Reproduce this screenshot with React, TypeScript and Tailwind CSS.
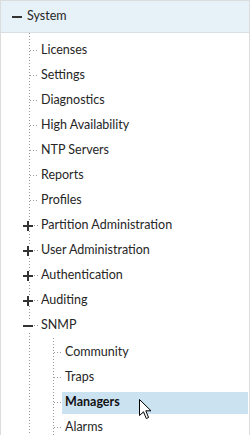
import React from "react";

type Node = {
  label: string;
  expander?: "plus" | "minus";
  selected?: boolean;
  children?: Node[];
};

const systemChildren: Node[] = [
  { label: "Licenses" },
  { label: "Settings" },
  { label: "Diagnostics" },
  { label: "High Availability" },
  { label: "NTP Servers" },
  { label: "Reports" },
  { label: "Profiles" },
  { label: "Partition Administration", expander: "plus" },
  { label: "User Administration", expander: "plus" },
  { label: "Authentication", expander: "plus" },
  { label: "Auditing", expander: "plus" },
  {
    label: "SNMP",
    expander: "minus",
    children: [
      { label: "Community" },
      { label: "Traps" },
      { label: "Managers", selected: true },
      { label: "Alarms" },
    ],
  },
];

const vline =
  "bg-[linear-gradient(#9a9a9a_1px,transparent_1px)] bg-[length:1px_3px] bg-repeat-y";
const hline =
  "h-px bg-[linear-gradient(to_right,#9a9a9a_1px,transparent_1px)] bg-[length:3px_1px] bg-repeat-x";

function Expander({ kind }: { kind: "plus" | "minus" }) {
  return (
    <span className="relative w-[10px] h-[10px] shrink-0 bg-white">
      <span className="absolute left-0 top-[4px] w-[10px] h-[2px] bg-[#333]" />
      {kind === "plus" && (
        <span className="absolute top-0 left-[4px] w-[2px] h-[10px] bg-[#333]" />
      )}
    </span>
  );
}

function TreeItem({ node }: { node: Node }) {
  return (
    <li>
      <div className="flex items-center h-[25px]">
        {node.expander ? (
          <>
            <span className="-ml-[7px] flex">
              <Expander kind={node.expander} />
            </span>
            <span className={`ml-[1px] w-[4px] ${hline}`} />
          </>
        ) : (
          <span className={`w-[8px] ${hline}`} />
        )}
        <span
          className={`flex-1 flex items-center h-[22px] pl-[3px] mr-px whitespace-nowrap ${
            node.selected ? "bg-[#cbe2f1] font-bold text-[#111]" : ""
          }`}
        >
          {node.label}
        </span>
      </div>
      {node.children && (
        <ul className={`ml-[23px] pl-px pt-[2px] h-[100px] ${vline}`}>
          {node.children.map((c) => (
            <TreeItem key={c.label} node={c} />
          ))}
        </ul>
      )}
    </li>
  );
}

function Cursor() {
  return (
    <svg
      className="absolute left-[138px] top-[398px]"
      width="13"
      height="21"
      viewBox="0 0 13 21"
    >
      <path
        d="M0.5 0.5 L0.5 16.5 L4.5 12.8 L7.3 19.5 L9.6 18.5 L6.8 11.8 L12 11.8 Z"
        fill="#fff"
        stroke="#000"
        strokeWidth="1"
        strokeLinejoin="miter"
      />
    </svg>
  );
}

export default function App() {
  return (
    <div
      className="relative w-[250px] h-[435px] overflow-hidden bg-white border-l border-r border-t border-[#dcdcdc] text-[12.5px] text-[#262626]"
      style={{ fontFamily: 'Lato, "Open Sans", sans-serif' }}
    >
      <div className="flex items-center h-[32px] bg-[#e7f1f8] border-b border-[#dadfe3] pl-[11px]">
        <span className="w-[10px] h-[2px] bg-[#333]" />
        <span className="ml-[5px]">System</span>
      </div>
      <ul className={`ml-[28px] pl-px pt-[5px] h-[410px] ${vline}`}>
        {systemChildren.map((n) => (
          <TreeItem key={n.label} node={n} />
        ))}
      </ul>
      <Cursor />
    </div>
  );
}
